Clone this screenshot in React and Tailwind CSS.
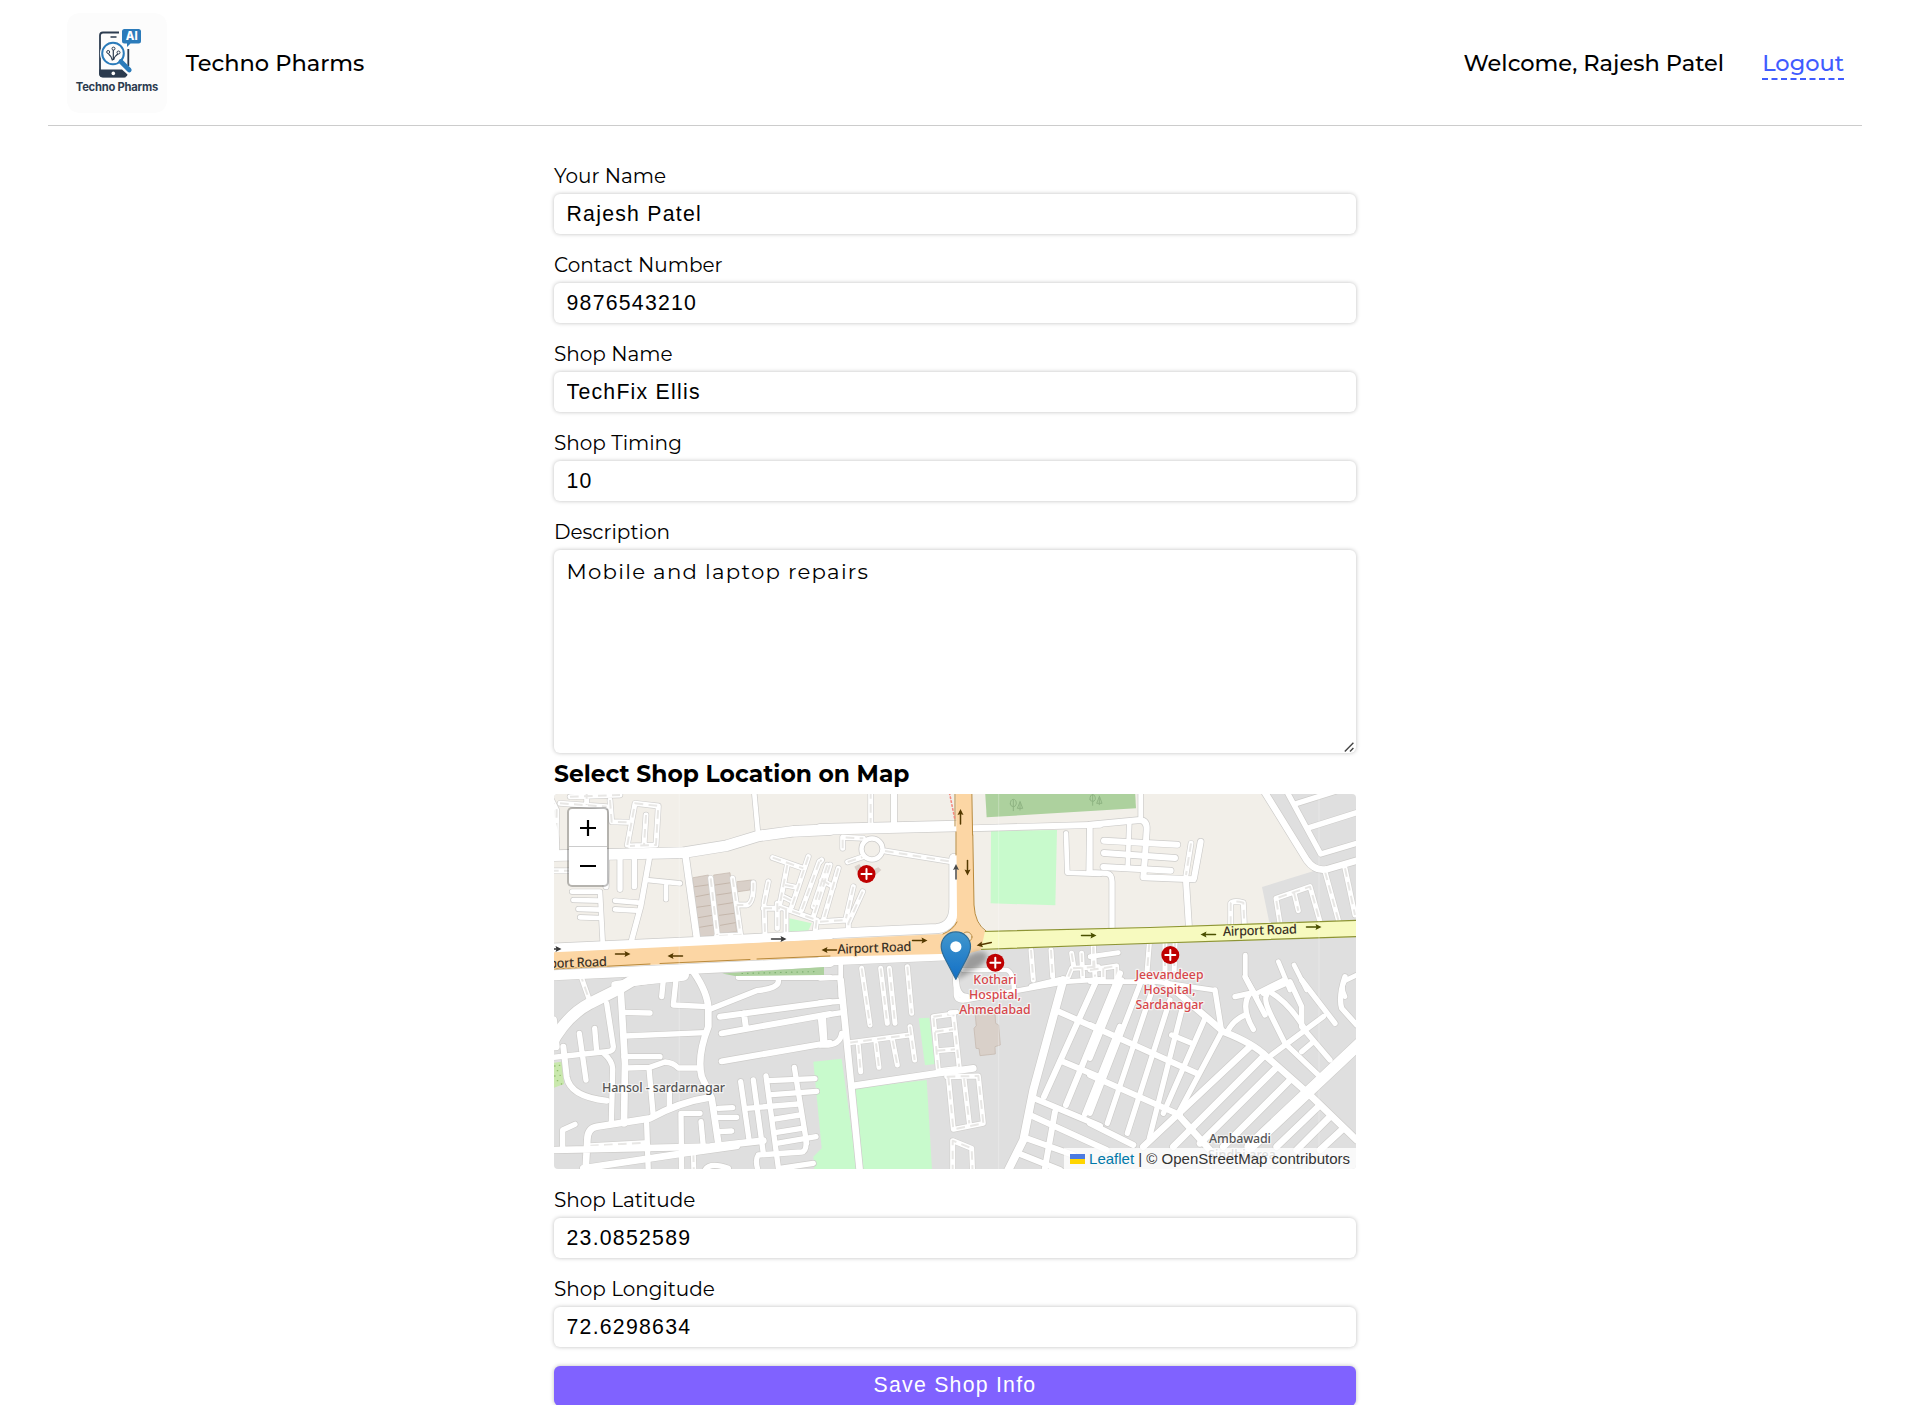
import React from "react";

const SECTORS = {
  A: "translate(550 790) scale(0.33333)",
  B: "translate(820 790) scale(0.33333)",
  C: "translate(1090 790) scale(0.33333)",
  D: "translate(550 980) scale(0.33333)",
  E: "translate(820 980) scale(0.33333)",
  F: "translate(1090 980) scale(0.33333)",
};

// [sector, width, path]
const ROADS = [
  ["A", 32, "M0 197L180 193L400 188L530 167L625 138L730 124L840 119"],
  ["A", 14, "M612 0L624 130"],
  ["A", 18, "M0 80Q22 120 18 190"],
  ["A", 16, "M170 190L168 290M210 205L210 298M253 205L253 290M298 205L272 350L245 450"],
  ["A", 14, "M290 270L390 280M348 285L348 328M195 332L265 338M195 358L262 362"],
  ["A", 14, "M66 305L150 305L158 455M70 330L150 332M85 357L150 359M90 382L150 384"],
  ["A", 20, "M407 200L440 440"],
  ["A", 28, "M0 475L440 455L840 434"],
  ["A", 30, "M0 556L400 538L840 516"],
  ["B", 32, "M0 118L410 108"],
  ["B", 18, "M455 115L840 104"],
  ["B", 18, "M222 0L222 105"],
  ["B", 28, "M0 432L350 416Q402 410 402 350L402 205"],
  ["B", 26, "M0 514L280 502L420 496"],
  ["B", 14, "M738 130L742 248L840 252M808 110L806 250"],
  ["B", 14, "M62 520L62 620M0 565L60 562"],
  ["B", 14, "M407 560L408 615Q410 635 440 630L575 605L740 575L840 568"],
  ["B", 14, "M430 540L560 540Q580 545 582 600"],
  ["C", 18, "M0 104L150 90Q172 92 170 120L165 200L160 262L310 268"],
  ["C", 14, "M152 0L152 90M118 95L113 235"],
  ["C", 18, "M42 152L262 164M42 189L255 204M40 231L242 242"],
  ["C", 18, "M332 155L312 265M288 272L297 415"],
  ["C", 16, "M0 105L0 240M0 248L50 250Q66 252 66 275L66 425"],
  ["C", 20, "M520 0L650 210Q675 245 710 238L800 212"],
  ["C", 16, "M588 0L692 192L800 160M615 42L780 -10M660 112L800 68"],
  ["C", 14, "M466 495L466 560L500 620M565 515L600 600M612 525L650 600M800 555L765 572Q750 590 765 620"],
  ["C", 14, "M0 575L200 575L370 600M0 500L85 488"],
  ["C", 14, "M500 610L580 570"],
  ["D", 34, "M0 200Q45 110 120 70L200 30L250 0L400 -15"],
  ["D", 22, "M195 15L400 -15M18 200L10 120"],
  ["D", 20, "M212 30L225 250L222 430"],
  ["D", 16, "M170 70L190 200Q190 214 170 215L10 232M88 160L108 300M134 145L140 215M160 218Q190 245 188 270L184 430"],
  ["D", 18, "M40 200L50 290Q60 350 170 362"],
  ["D", 16, "M220 97L300 99M222 230L330 230M225 168L465 158"],
  ["D", 16, "M225 264L300 262L345 246Q370 248 385 264L450 264"],
  ["D", 16, "M297 265L310 410M358 330L358 380"],
  ["D", 20, "M430 -25Q475 40 475 90L475 140Q440 230 455 290L485 355L505 490"],
  ["D", 16, "M340 0L335 50M380 -20L370 75L475 80M480 88L620 32Q690 25 685 0M565 -8L840 -8"],
  ["D", 18, "M510 110L840 66M515 160L840 102M515 244L840 188M582 100L588 145M812 110L820 190"],
  ["D", 20, "M10 510L480 500L640 482M105 600L112 480Q112 445 140 440L300 415Q390 365 480 352"],
  ["D", 16, "M38 500L38 450L75 433M290 430L295 580M395 580L393 400L450 400M453 425L460 500"],
  ["D", 16, "M505 385L548 383M505 412L560 412M505 455L545 453"],
  ["D", 20, "M100 565L300 535L400 520L560 498"],
  ["D", 16, "M572 305L597 478M610 300L640 520M648 288L690 600M733 262L770 490"],
  ["D", 16, "M655 302L795 296M590 385L745 372M665 344L800 334M668 418L750 405M675 458L755 445M680 490L798 470M625 525L755 516Q770 514 768 480M625 525Q610 545 635 600M690 565L790 550M465 570Q480 545 535 565"],
  ["E", 20, "M62 0L80 180L95 330L122 600"],
  ["E", 16, "M0 68L65 64M0 108L65 98M10 110L15 195M0 195Q60 200 65 160"],
  ["E", 20, "M95 318L350 280L460 265"],
  ["E", 24, "M730 0L640 330L610 480L555 590"],
  ["E", 18, "M830 0L672 350M900 -20L738 375M900 140L795 402"],
  ["E", 18, "M710 92L840 150M722 242L840 292M635 352L840 438M630 405L860 510M620 475L760 525M600 522L720 570M705 395L672 580"],
  ["E", 18, "M408 0Q410 50 440 50M635 20L720 0"],
  ["E", 14, "M390 98L410 96"],
  ["F", 18, "M0 135L220 235L320 280M0 285L270 405M0 430L130 495"],
  ["F", 16, "M95 0L0 235M155 0L0 400M190 20L52 430M240 60L112 460M278 80L178 475M345 115L220 400M395 155L265 400"],
  ["F", 16, "M245 165L305 190"],
  ["F", 20, "M230 10L330 95L400 155Q490 190 530 230L660 345L800 480"],
  ["F", 16, "M375 30L395 155M412 155Q430 120 465 105M435 50L480 40Q450 80 490 148M465 -10L525 105M530 45Q520 60 545 110L585 190L690 290"],
  ["F", 16, "M520 40L600 5L635 80L635 140L720 240M530 30Q590 60 640 140M635 0L735 130M545 225L700 110M635 215L670 185"],
  ["F", 16, "M765 -10Q745 50 755 85L800 135"],
  ["F", 20, "M480 200L160 500M520 230L250 500M560 262L330 490M600 300L400 500M685 380L560 500M720 410L620 510M755 450L690 510"],
  ["F", 20, "M265 405L360 510"],
  ["F", 34, "M820 180L480 500"],
];

// Alleys drawn as white strips with a dashed grey centre line
const ALLEYS = [
  ["A", "M0 20L20 60L18 180M30 40L170 50M110 0L110 45M60 20L210 15M180 30L185 95L235 97"],
  ["A", "M232 165L255 40L325 48L318 165L240 168M288 75L282 165"],
  ["A", "M0 242L60 242"],
  ["A", "M482 265L502 435M548 265L572 435L500 438M610 278Q612 340 590 345L560 345"],
  ["A", "M655 275L642 340L645 430M640 355L690 355M682 340L682 415M708 360L708 425"],
  ["A", "M668 203L760 235M775 200L725 350M712 225L688 350L800 390M808 215L755 360M840 225L790 380M800 390L796 420M705 285L740 292M700 320L730 335"],
  ["B", "M152 0L152 100"],
  ["B", "M68 175L68 142L130 145M195 183L400 216M83 216L130 200"],
  ["B", "M0 215L5 210M22 225L-20 350M55 235L10 390M5 270L40 290M100 290L78 385M128 305L85 400L85 415M0 395L80 390"],
  ["B", "M125 535L150 705M182 535L202 700M208 535L225 700M262 530L275 670"],
  ["B", "M633 480L640 570M693 480L698 560M745 560L755 535M755 490L762 535L835 530M785 490L788 560M820 470L825 560"],
  ["C", "M303 160L288 255"],
  ["C", "M422 405L422 340Q430 330 460 338L463 405"],
  ["C", "M570 400L558 325L660 290L690 395M612 308L625 362M705 245L745 390M765 235L795 375"],
  ["C", "M178 460L170 560M225 460L225 560M255 460L252 560M0 540L80 528L80 570M40 535L40 570M10 470L10 530"],
  ["D", "M90 -20L118 60M120 497L285 488M430 520L432 590"],
  ["E", "M88 188L268 165M115 195L122 275M168 190L177 262M218 182L232 255M270 140L284 240"],
  ["E", "M340 110L400 102L418 265L355 272L340 110M345 155L400 148M350 212L405 208"],
  ["E", "M380 290L475 288L490 430L400 448L385 290M432 295L448 430"],
  ["E", "M398 580L398 482L455 505L458 580"],
];

const Arrow = ({ x, y, r = 0, c = "#553a00", l = 15 }) => (
  <g transform={`translate(${x} ${y}) rotate(${r})`}>
    <path d={`M${-l / 2} 0H${l / 2 - 3}`} stroke={c} strokeWidth="1.5" />
    <path d={`M${l / 2} 0l-6 -3l1 3l-1 3z`} fill={c} />
  </g>
);

const Hospital = ({ x, y }) => (
  <g transform={`translate(${x} ${y})`}>
    <circle r="9" fill="#bf0000" />
    <path d="M0 -5V5M-5 0H5" stroke="#fff" strokeWidth="2" />
  </g>
);

const label = {
  fontFamily: '"Noto Sans", sans-serif',
  paintOrder: "stroke",
  stroke: "#ffffff",
  strokeOpacity: 0.6,
  strokeWidth: 2.5,
  strokeLinejoin: "round",
};

function MapDrawing() {
  return (
    <svg viewBox="554 794 802 375" className="block h-full w-full" fill="none" strokeLinecap="round" strokeLinejoin="round">
      <rect x="554" y="794" width="802" height="375" fill="#dfdfdf" />
      <path d="M554 794H1264L1317 870L1262 887L1270 926L980 940L830 960L554 976Z" fill="#f2efe9" />
      <g transform={SECTORS.A}>
        <path d="M430 263L475 255L495 438L448 440ZM492 255L540 248L560 425L512 430ZM562 275L605 270L600 300L565 305Z" fill="#d9d0c9" stroke="#c3b5ab" strokeWidth="2" />
        <path d="M434 290L478 284M438 320L480 312M440 352L482 346M445 383L486 376M448 412L490 405M496 285L543 278M500 315L546 308M504 345L548 338M508 376L552 370M511 406L556 398" stroke="#b9a99c" strokeWidth="2" />
        <path d="M718 385L785 400L775 422L718 425Z" fill="#c8facc" />
      </g>
      <g transform={SECTORS.B}>
        <path d="M495 0H945L948 55L500 82Z" fill="#add19e" />
        <path d="M580 62V30M571 42Q571 28 580 28Q589 28 589 42Q585 52 580 50Q572 50 571 42M600 60V36L592 55H608L600 34M818 46V14M810 28Q810 14 818 14Q826 14 826 28Q822 36 818 34Q810 34 810 28M838 44V20L830 40H846L838 18" stroke="#8fb483" strokeWidth="3" />
        <path d="M513 122L711 120L706 346L512 340Z" fill="#c8facc" />
        <path d="M103 230L118 222L135 250L175 232L184 240L150 270L120 262Z" fill="#d9d0c9" />
      </g>
      <g transform={SECTORS.D}>
        <path d="M0 250L35 245L42 312L0 328Z" fill="#c9e8ad" />
        <path d="M14 258h1M28 256h1M22 272h1M14 288h1M30 286h1M22 302h1M34 312h1" stroke="#8fbf6b" strokeWidth="4" />
      </g>
      <g transform={SECTORS.E}>
        <path d="M-20 245L65 236L115 600H-15L-20 530L5 505Z" fill="#c8facc" />
        <path d="M103 325L320 300L338 600H125Z" fill="#c8facc" />
        <path d="M296 115L328 113L345 252L315 256Z" fill="#c8facc" />
        <path d="M466 95L525 100L527 130L536 135L541 195L525 200L526 222L480 227L477 206L468 205L462 145L468 138Z" fill="#d9d0c9" stroke="#c3b5ab" strokeWidth="2" />
      </g>
      <g>
        {ROADS.map(([s, w, d], i) => (
          <path key={i} transform={SECTORS[s]} d={d} stroke="#cdccca" strokeWidth={w + 4} />
        ))}
        {ALLEYS.map(([s, d], i) => (
          <path key={i} transform={SECTORS[s]} d={d} stroke="#d2d1cf" strokeWidth={19} />
        ))}
        <circle cx="872" cy="849" r="10.5" stroke="#cdccca" strokeWidth="6" />
        {ALLEYS.map(([s, d], i) => (
          <path key={i} transform={SECTORS[s]} d={d} stroke="#fff" strokeWidth={15} />
        ))}
        {ALLEYS.map(([s, d], i) => (
          <path key={i} transform={SECTORS[s]} d={d} stroke="#e8e7e5" strokeWidth={6} strokeDasharray="26 16" strokeLinecap="butt" />
        ))}
        {ROADS.map(([s, w, d], i) => (
          <path key={i} transform={SECTORS[s]} d={d} stroke="#fff" strokeWidth={w} />
        ))}
        <circle cx="872" cy="849" r="10.5" stroke="#fff" strokeWidth="4.4" />
      </g>
      <path d="M722 973.5L824 967V975L735 976Z" fill="#add19e" />
      <path d="M742 973.5L818 971.5" stroke="#7fb072" strokeWidth="1.2" strokeDasharray="0.5 5" />

      <path d="M980 930.5Q984 932 1150 927L1360 920V937L1100 945L981 950Z" fill="#f7fabf" />
      <path d="M983 931.5L1150 927.5L1360 920.3M978 949.5L1100 945L1360 936.5" stroke="#8d9435" strokeWidth="1.2" />
      <path
        d="M550 952.5L943 934Q957 928 957 915L956 790H971.5L974 905Q975 924 985 931L981 950L970 953L940 954L820 957L550 969.5Z"
        fill="#fcd6a4"
      />
      <path d="M971.8 790L972.6 835M972.8 835L974 905Q975 924 986 931M955 790V826M956 832V855M943 934Q953 930 957 922M554 969L650 964M660 963.5L750 959.5M757 959L830 956" stroke="#b98a3c" strokeWidth="1" />
      <circle cx="967" cy="937" r="5" fill="#f6e3c6" stroke="#c0924a" />
      <path d="M949.5 793L955 820" stroke="#f58a80" strokeWidth="1.6" strokeDasharray="1.5 2.5" />
      <path d="M679.2 794V1169M998.7 794V1169M1319 794V1169" stroke="#fff" strokeOpacity="0.35" strokeWidth="0.8" />

      <Arrow x={554} y={949} c="#383838" />
      <Arrow x={623} y={954} />
      <Arrow x={675} y={956} r={180} />
      <Arrow x={779} y={939} c="#383838" />
      <Arrow x={829} y={950} r={180} />
      <Arrow x={920} y={940.5} />
      <Arrow x={960.5} y={816.5} r={-90} />
      <Arrow x={956} y={871.5} r={-90} c="#4a4a4a" />
      <Arrow x={967.5} y={868} r={90} />
      <Arrow x={984} y={944} r={168} />
      <Arrow x={1089} y={935.5} c="#4a4f00" />
      <Arrow x={1208} y={934.5} r={180} c="#4a4f00" />
      <Arrow x={1314} y={927} c="#4a4f00" />

      <g fontSize="13" fontWeight="500" fill="#3b3226">
        <text x="837.5" y="953.7" textLength="74" transform="rotate(-2 837 953)" style={{ ...label, stroke: "#fcd6a4" }}>Airport Road</text>
        <text x="533" y="966" textLength="74" transform="rotate(-2 607 965)" style={{ ...label, stroke: "#fcd6a4" }}>Airport Road</text>
        <text x="1223" y="936" textLength="74" transform="rotate(-2 1223 935)" style={{ ...label, stroke: "#f7fabf" }}>Airport Road</text>
      </g>
      <g fontSize="12.5" fontWeight="500" fill="#555">
        <text x="602" y="1092" textLength="123" style={label}>Hansol - sardarnagar</text>
        <text x="1209" y="1143" textLength="62" style={label}>Ambawadi</text>
        <text x="1208" y="1158.5" textLength="68" style={label}>Sindhi area</text>
      </g>
      <g fontSize="12.3" fontWeight="500" fill="#d6464a" textAnchor="middle">
        <text x="995" y="984" style={label}>Kothari</text>
        <text x="995" y="999" style={label}>Hospital,</text>
        <text x="995" y="1013.5" style={label}>Ahmedabad</text>
        <text x="1169.5" y="979" style={label}>Jeevandeep</text>
        <text x="1169.5" y="994" style={label}>Hospital,</text>
        <text x="1169.5" y="1009" style={label}>Sardanagar</text>
      </g>
      <Hospital x={866.5} y={874} />
      <Hospital x={995.3} y={962.7} />
      <Hospital x={1170.3} y={955} />

      <defs>
        <linearGradient id="pin" x1="0" y1="0" x2="0" y2="1">
          <stop offset="0" stopColor="#4197cd" />
          <stop offset="1" stopColor="#126fc6" />
        </linearGradient>
        <filter id="soft" x="-30%" y="-30%" width="160%" height="160%">
          <feGaussianBlur stdDeviation="2.4" />
        </filter>
      </defs>
      <path d="M956 980L966 957Q979 948 987 954Q989 962 974 970Z" fill="#000" opacity="0.3" filter="url(#soft)" />
      <g transform="translate(940.6 931.3) scale(1.22 1.2)">
        <path d="M12.5 0.5C5.8 0.5 0.5 5.8 0.5 12.8C0.5 16.5 2.2 20 4 23.5L12.5 40L21 23.5C22.8 20 24.5 16.5 24.5 12.8C24.5 5.8 19.2 0.5 12.5 0.5Z" fill="url(#pin)" stroke="#2e6c97" strokeWidth="1" />
        <circle cx="12.5" cy="12.8" r="4.6" fill="#fff" />
      </g>
    </svg>
  );
}

function Logo() {
  return (
    <svg viewBox="67 13 100 100" className="h-[100px] w-[100px] rounded-[13px] bg-[#fcfcfc]" fill="none">
      <path d="M119 32.5H103Q100 32.5 100 35.5V73.5Q100 76.5 103 76.5H125.5M128.3 49V66" stroke="#2b3b4f" strokeWidth="1.8" />
      <path d="M99.5 69.5H122L127.5 74.5Q127 77.2 123.5 77.2H103Q99.2 77.2 99.2 73.5Z" fill="#2b3b4f" />
      <path d="M110.5 37H116.5" stroke="#2b3b4f" strokeWidth="1.3" />
      <circle cx="113.3" cy="73.4" r="1.8" fill="#fff" />
      <circle cx="113" cy="53.5" r="13" fill="#fcfcfc" />
      <circle cx="113" cy="53.5" r="10.8" stroke="#2b7bba" strokeWidth="2" />
      <path d="M120.8 61.5L129.3 70" stroke="#2b7bba" strokeWidth="4.6" strokeLinecap="round" />
      <path d="M113.3 60V49.5M112.5 60.5Q111.5 56 108.5 54M113.5 60Q115 55.5 118 54" stroke="#2b3b4f" strokeWidth="1.2" />
      <g stroke="#2b3b4f" strokeWidth="1" fill="#fcfcfc">
        <circle cx="113.5" cy="48.6" r="1.5" />
        <circle cx="108.2" cy="52" r="1.5" />
        <circle cx="118.5" cy="52.5" r="1.5" />
      </g>
      <path d="M124.5 29H138.5Q141 29 141 31.5V41Q141 43.5 138.5 43.5H130.5L127 47V43.5H124.5Q122 43.5 122 41V31.5Q122 29 124.5 29Z" fill="#2b7bba" />
      <text x="131.7" y="40.4" textAnchor="middle" fontFamily="Inter, sans-serif" fontWeight="800" fontSize="11.2" fill="#fff">AI</text>
      <text x="75.8" y="91.3" textLength="82.5" fontFamily="Inter, sans-serif" fontWeight="700" fontSize="11.2" fill="#2b3b4f">Techno Pharms</text>
    </svg>
  );
}

const fieldBox =
  "block w-full rounded-md bg-white px-[12.5px] text-[21.25px] text-black shadow-[0_0_4px_rgba(0,0,0,0.26)] outline-none";

const labelBox = "block h-[31px] pt-[1px] text-[20px] leading-[24px] font-normal";

function Field({ label: text, value }) {
  return (
    <div className="h-[89px]">
      <label className={labelBox}>{text}</label>
      <input
        defaultValue={value}
        className={`${fieldBox} h-[40px] font-['Liberation_Sans',Arial,sans-serif] tracking-[1.25px]`}
      />
    </div>
  );
}

export default function App() {
  return (
    <div className="flex h-[1405px] flex-col overflow-hidden bg-white font-[Montserrat,Inter,sans-serif] text-black">
      <header className="mx-[48px] flex h-[126px] shrink-0 items-center justify-between border-b border-[#ccc] pr-[18px] pl-[19px] text-[22.5px] font-medium">
        <div className="flex items-center gap-[18.75px]">
          <Logo />
          <span className="pt-[2px]">Techno Pharms</span>
        </div>
        <div className="flex items-center gap-[38px] pt-[2px]">
          <span>Welcome, Rajesh Patel</span>
          <a className="mt-[2px] border-b-2 border-dashed border-[#3f5cff] leading-[29px] text-[#3f5cff]">Logout</a>
        </div>
      </header>

      <main className="mx-auto flex w-[802px] flex-col pt-[37px]">
        <Field label="Your Name" value="Rajesh Patel" />
        <Field label="Contact Number" value="9876543210" />
        <Field label="Shop Name" value="TechFix Ellis" />
        <Field label="Shop Timing" value="10" />
        <label className={labelBox}>Description</label>
        <div className="relative h-[203px] shrink-0">
          <textarea
            defaultValue="Mobile and laptop repairs"
            className={`${fieldBox} h-[203px] resize-none pt-[8px] leading-[26px] font-normal tracking-[1.25px]`}
          />
          <svg viewBox="0 0 10 10" className="absolute right-[2px] bottom-[1px] h-[10px] w-[10px]" stroke="#444" strokeWidth="1.4">
            <path d="M0.8 9.4L9.4 0.8M6 9.4L9.4 6" />
          </svg>
        </div>
        <h2 className="h-[41px] pt-[7px] text-[23.4px] leading-[28px] font-bold">Select Shop Location on Map</h2>

        <section className="relative mb-[18px] h-[375px] shrink-0 overflow-hidden rounded-[4px]">
          <MapDrawing />
          <div className="absolute top-[13px] left-[12.5px] flex flex-col overflow-hidden rounded-[5px] border-2 border-black/25 bg-white bg-clip-padding">
            <button className="flex h-[38px] w-[38px] items-center justify-center border-b border-[#ccc]">
              <svg viewBox="0 0 16 16" className="h-4 w-4" stroke="#000" strokeWidth="2.2">
                <path d="M8 0V16M0 8H16" />
              </svg>
            </button>
            <button className="flex h-[38px] w-[38px] items-center justify-center">
              <svg viewBox="0 0 16 16" className="h-4 w-4" stroke="#000" strokeWidth="2.2">
                <path d="M0 8H16" />
              </svg>
            </button>
          </div>
          <div className="absolute right-0 bottom-0 flex h-[21px] items-center bg-white/80 px-[6px] pt-[2px] font-['Liberation_Sans',Arial,sans-serif] text-[15px] text-[#333]">
            <svg viewBox="0 0 15 10" className="mr-[4px] mb-[1px] h-[10px] w-[15px]">
              <path fill="#4C7BE1" d="M0 0h15v5H0z" />
              <path fill="#FFD500" d="M0 5h15v5H0z" />
            </svg>
            <span className="whitespace-pre"><span className="text-[#0078a8]">Leaflet</span> | © OpenStreetMap contributors</span>
          </div>
        </section>

        <Field label="Shop Latitude" value="23.0852589" />
        <Field label="Shop Longitude" value="72.6298634" />
        <button className="mt-[1px] h-[40px] shrink-0 rounded-md bg-[#8062ff] font-['Liberation_Sans',Arial,sans-serif] text-[21.25px] tracking-[1.25px] text-white shadow-[0_0_4px_rgba(0,0,0,0.26)]">
          Save Shop Info
        </button>
      </main>
    </div>
  );
}
